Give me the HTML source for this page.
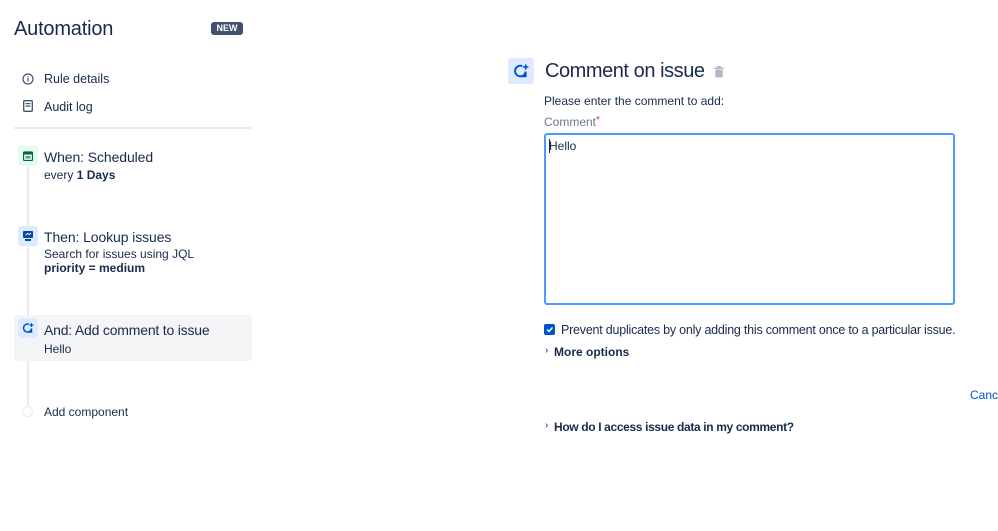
<!DOCTYPE html>
<html><head><meta charset="utf-8"><style>
body{margin:0;width:998px;height:531px;background:#fff;font-family:"Liberation Sans",sans-serif;color:#172b4d;position:relative;overflow:hidden}
.a{position:absolute;white-space:nowrap}
.ic{position:absolute;width:20px;height:20px;border-radius:3px}
</style></head><body>
<div class="a" style="left:14px;top:18px;font-size:20px;letter-spacing:-0.2px">Automation</div>
<div class="a" style="left:211px;top:22px;width:32px;height:13px;background:#42526e;color:#fff;font-size:9px;font-weight:bold;text-align:center;line-height:13px;border-radius:3px">NEW</div>

<svg class="a" style="left:22px;top:73px" width="12" height="12" viewBox="0 0 12 12"><circle cx="6" cy="6" r="5" fill="none" stroke="#42526e" stroke-width="1.2"/><rect x="5.4" y="5" width="1.2" height="3.5" fill="#42526e"/><rect x="5.4" y="3" width="1.2" height="1.2" fill="#42526e"/></svg>
<div class="a" style="left:44px;top:72px;font-size:12.5px">Rule details</div>
<svg class="a" style="left:23px;top:100px" width="10" height="12" viewBox="0 0 10 12"><rect x="0.7" y="0.7" width="8.6" height="10.6" rx="1" fill="none" stroke="#42526e" stroke-width="1.3"/><rect x="2.5" y="3" width="5" height="1.2" fill="#42526e"/><rect x="2.5" y="5.5" width="5" height="1.2" fill="#42526e"/></svg>
<div class="a" style="left:44px;top:100px;font-size:12.5px">Audit log</div>
<div class="a" style="left:14px;top:127px;width:238px;height:2px;background:#ebecf0"></div>

<div class="a" style="left:27px;top:166px;width:2px;height:240px;background:#ebecf0"></div>

<div class="ic" style="left:18px;top:146px;background:#e3fcef"></div>
<svg class="a" style="left:23px;top:151px" width="10" height="10" viewBox="0 0 10 10"><rect x="0.5" y="1" width="9" height="8.5" rx="1" fill="none" stroke="#006644" stroke-width="1.2"/><rect x="0.5" y="1" width="9" height="2.5" fill="#006644"/><rect x="2.5" y="5" width="5" height="2.5" fill="#006644" opacity=".6"/></svg>
<div class="a" style="left:44px;top:149px;font-size:14px;letter-spacing:-0.1px">When: Scheduled</div>
<div class="a" style="left:44px;top:168px;font-size:12px">every <b>1 Days</b></div>

<div class="ic" style="left:18px;top:226px;background:#deebff"></div>
<svg class="a" style="left:22px;top:230px" width="12" height="12" viewBox="0 0 12 12"><rect x="1" y="1" width="10" height="7" rx="1" fill="#0747a6"/><rect x="3" y="9" width="6" height="2" fill="#0747a6"/><path d="M3.5 5l2-1.5 2 1 1.5-1.5" stroke="#fff" fill="none" stroke-width="1"/></svg>
<div class="a" style="left:44px;top:229px;font-size:14px;letter-spacing:-0.1px">Then: Lookup issues</div>
<div class="a" style="left:44px;top:247px;font-size:12px">Search for issues using JQL</div>
<div class="a" style="left:44px;top:261px;font-size:12px;font-weight:bold">priority = medium</div>

<div class="a" style="left:14px;top:315px;width:238px;height:46px;background:#f4f5f7;border-radius:3px"></div>
<div class="ic" style="left:18px;top:318px;background:#deebff"></div>
<svg class="a" style="left:22px;top:322px" width="12" height="12" viewBox="0 0 12 12"><path d="M9.5 6.5A4 4 0 1 1 7 2.3" fill="none" stroke="#0052cc" stroke-width="1.5"/><path d="M9.5 6.5V10H6" fill="none" stroke="#0052cc" stroke-width="1.5"/><path d="M9.5 1v4M7.5 3h4" stroke="#0052cc" stroke-width="1.2"/></svg>
<div class="a" style="left:44px;top:322px;font-size:14px;letter-spacing:-0.2px">And: Add comment to issue</div>
<div class="a" style="left:44px;top:342px;font-size:12px">Hello</div>

<div class="a" style="left:22px;top:406px;width:9px;height:9px;border:1px solid #ebecf0;border-radius:50%;background:#fff"></div>
<div class="a" style="left:44px;top:405px;font-size:12px">Add component</div>

<div class="a" style="left:508px;top:58px;width:26px;height:26px;background:#deebff;border-radius:3px"></div>
<svg class="a" style="left:513px;top:63px" width="16" height="16" viewBox="0 0 12 12"><path d="M9.5 6.5A4 4 0 1 1 7 2.3" fill="none" stroke="#0052cc" stroke-width="1.4"/><path d="M9.5 6.5V10H6" fill="none" stroke="#0052cc" stroke-width="1.4"/><path d="M9.5 1v4M7.5 3h4" stroke="#0052cc" stroke-width="1.2"/></svg>
<div class="a" style="left:545px;top:60px;font-size:20px;letter-spacing:-0.45px">Comment on issue</div>
<svg class="a" style="left:714px;top:66px" width="10" height="12" viewBox="0 0 10 12"><rect x="0" y="1.5" width="10" height="1.5" fill="#b3bac5"/><rect x="3" y="0" width="4" height="2" fill="#b3bac5"/><rect x="1.2" y="3.5" width="7.6" height="8" rx="1" fill="#b3bac5"/></svg>
<div class="a" style="left:544px;top:94px;font-size:12px">Please enter the comment to add:</div>
<div class="a" style="left:544px;top:115px;font-size:12px;color:#6b778c">Comment<span style="color:#de350b;font-size:10px;vertical-align:top">*</span></div>
<div class="a" style="left:544px;top:133px;width:407px;height:168px;border:2px solid #4c9aff;border-radius:3px"></div>
<div class="a" style="left:549px;top:139px;font-size:12px">Hello</div>
<div class="a" style="left:549px;top:139px;width:1px;height:14px;background:#172b4d"></div>
<div class="a" style="left:544px;top:324px;width:11px;height:11px;background:#0052cc;border-radius:2px"></div>
<svg class="a" style="left:545px;top:325px" width="9" height="9" viewBox="0 0 9 9"><path d="M2 4.5l2 2 3.5-4" stroke="#fff" stroke-width="1.5" fill="none"/></svg>
<div class="a" style="left:561px;top:323px;font-size:12.5px;letter-spacing:-0.22px">Prevent duplicates by only adding this comment once to a particular issue.</div>
<div class="a" style="left:545px;top:345px;font-size:10px">›</div>
<div class="a" style="left:554px;top:345px;font-size:12px;font-weight:bold">More options</div>
<div class="a" style="left:970px;top:388px;font-size:12px;color:#0052cc">Canc</div>
<div class="a" style="left:545px;top:420px;font-size:10px">›</div>
<div class="a" style="left:554px;top:420px;font-size:12px;font-weight:bold;letter-spacing:-0.35px">How do I access issue data in my comment?</div>
</body></html>
